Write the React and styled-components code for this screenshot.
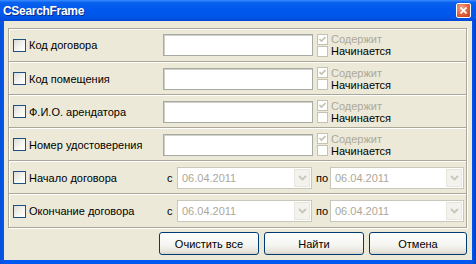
import React from "react";
import styled, { createGlobalStyle } from "styled-components";

const GlobalStyle = createGlobalStyle`
  html, body { margin: 0; padding: 0; }
  body { font-family: "Liberation Sans", Arial, sans-serif; font-size: 11px; }
`;

const Window = styled.div`
  width: 476px;
  height: 264px;
  display: flex;
  flex-direction: column;
  background: linear-gradient(to right, #0a4fd6, #0058ee 3px, #0058ee 472px, #0040c0);
  box-sizing: border-box;
`;

const TitleBar = styled.div`
  height: 21px;
  flex: none;
  display: flex;
  align-items: center;
  justify-content: space-between;
  padding: 0 5px 0 3px;
  background: linear-gradient(to bottom, #3a8cff 0%, #0a62ee 12%, #0058ee 45%, #0056e8 80%, #0048d8 100%);
`;

const Title = styled.span`
  color: #fff;
  font-weight: bold;
  font-size: 12px;
  letter-spacing: -0.3px;
  text-shadow: 1px 1px 0 #0a2a8a;
`;

const CloseButton = styled.div`
  width: 13px;
  height: 13px;
  border: 1px solid #fff;
  border-radius: 2px;
  background: radial-gradient(circle at 35% 30%, #f0a890, #e0603a 55%, #c0401c);
  display: flex;
  align-items: center;
  justify-content: center;
`;

const Body = styled.div`
  flex: 1;
  margin: 0 4px 4px;
  background: #ece9d8;
  padding: 7px 5px 0 4px;
  display: flex;
  flex-direction: column;
`;

const Panel = styled.div`
  border: 1px solid #aca899;
  box-shadow: 1px 1px 0 #fff, inset 1px 1px 0 #fff;
  display: flex;
  flex-direction: column;
`;

const Row = styled.div`
  height: 33px;
  box-sizing: border-box;
  display: grid;
  grid-template-columns: 150px 1fr;
  align-items: center;
  padding-left: 4px;
  border-top: 1px solid #fff;
  border-bottom: 1px solid #aca899;
  &:first-child { border-top: none; }
  &:last-child { border-bottom: none; }
`;

const LabelCell = styled.label`
  display: flex;
  align-items: center;
  gap: 3px;
  color: #000;
`;

const Box = styled.span`
  width: ${(p) => p.size}px;
  height: ${(p) => p.size}px;
  box-sizing: border-box;
  flex: none;
  display: flex;
  align-items: center;
  justify-content: center;
  border: 1px solid ${(p) => (p.disabled ? "#c5c2b2" : "#1c5180")};
  background: ${(p) =>
    p.disabled ? "#fff" : "linear-gradient(135deg, #dcdcd7, #f6f6f3 60%, #fff)"};
`;

const Field = styled.div`
  display: flex;
  align-items: center;
`;

const TextInput = styled.div`
  width: 150px;
  height: 22px;
  box-sizing: border-box;
  background: #fff;
  border: 1px solid #a5aca2;
  box-shadow: inset 1px 1px 0 #d0d0c8;
`;

const Options = styled.div`
  margin-left: 4px;
  display: flex;
  flex-direction: column;
`;

const Option = styled.div`
  height: 12px;
  display: flex;
  align-items: center;
  gap: 3px;
  color: ${(p) => (p.muted ? "#aca899" : "#000")};
  line-height: 12px;
`;

const RangeLabel = styled.span`
  width: ${(p) => p.w}px;
  box-sizing: border-box;
  padding-left: 4px;
  color: #000;
`;

const Combo = styled.div`
  width: ${(p) => p.w}px;
  height: 22px;
  box-sizing: border-box;
  border: 1px solid #c9c7ba;
  background: #fff;
  display: flex;
  align-items: center;
  padding: 1px;
`;

const ComboText = styled.span`
  flex: 1;
  padding-left: 3px;
  color: #aca899;
`;

const ComboArrow = styled.span`
  width: 16px;
  height: 18px;
  background: #f3f2ec;
  border: 1px solid #e8e6dc;
  box-sizing: border-box;
  display: flex;
  align-items: center;
  justify-content: center;
`;

const ButtonRow = styled.div`
  margin-top: 4px;
  display: flex;
  justify-content: flex-end;
  gap: 5px;
  padding-right: 0;
`;

const Button = styled.button`
  width: ${(p) => p.w}px;
  height: 23px;
  border: 1px solid #003c74;
  border-radius: 3px;
  background: linear-gradient(to bottom, #ffffff, #f4f4f0 60%, #e6e3d8 90%, #d6d0c5);
  font-family: "Liberation Sans", Arial, sans-serif;
  font-size: 11px;
  color: #000;
  padding: 0;
`;

const Check = ({ size = 13, disabled, checked }) => (
  <Box size={size} disabled={disabled}>
    {checked && (
      <svg width="7" height="7" viewBox="0 0 7 7">
        <path d="M0.5 3 L2.5 5 L6.5 1" stroke="#c5c2b2" strokeWidth="1.6" fill="none" />
      </svg>
    )}
  </Box>
);

const textRows = ["Код договора", "Код помещения", "Ф.И.О. арендатора", "Номер удостоверения"];
const dateRows = ["Начало договора", "Окончание договора"];

const Arrow = () => (
  <svg width="9" height="6" viewBox="0 0 9 6">
    <path d="M1 1 L4.5 4.5 L8 1" stroke="#c9c7ba" strokeWidth="1.8" fill="none" />
  </svg>
);

export default function App() {
  return (
    <Window>
      <GlobalStyle />
      <TitleBar>
        <Title>CSearchFrame</Title>
        <CloseButton>
          <svg width="7" height="7" viewBox="0 0 7 7">
            <path d="M0.5 0.5 L6.5 6.5 M6.5 0.5 L0.5 6.5" stroke="#fff" strokeWidth="1.6" />
          </svg>
        </CloseButton>
      </TitleBar>
      <Body>
        <Panel>
          {textRows.map((label) => (
            <Row key={label}>
              <LabelCell>
                <Check />
                {label}
              </LabelCell>
              <Field>
                <TextInput />
                <Options>
                  <Option muted>
                    <Check size={11} disabled checked />
                    Содержит
                  </Option>
                  <Option>
                    <Check size={11} disabled />
                    Начинается
                  </Option>
                </Options>
              </Field>
            </Row>
          ))}
          {dateRows.map((label) => (
            <Row key={label}>
              <LabelCell>
                <Check />
                {label}
              </LabelCell>
              <Field>
                <RangeLabel w={14}>с</RangeLabel>
                <Combo w={135}>
                  <ComboText>06.04.2011</ComboText>
                  <ComboArrow>
                    <Arrow />
                  </ComboArrow>
                </Combo>
                <RangeLabel w={18}>по</RangeLabel>
                <Combo w={134}>
                  <ComboText>06.04.2011</ComboText>
                  <ComboArrow>
                    <Arrow />
                  </ComboArrow>
                </Combo>
              </Field>
            </Row>
          ))}
        </Panel>
        <ButtonRow>
          <Button w={100}>Очистить все</Button>
          <Button w={100}>Найти</Button>
          <Button w={98}>Отмена</Button>
        </ButtonRow>
      </Body>
    </Window>
  );
}
